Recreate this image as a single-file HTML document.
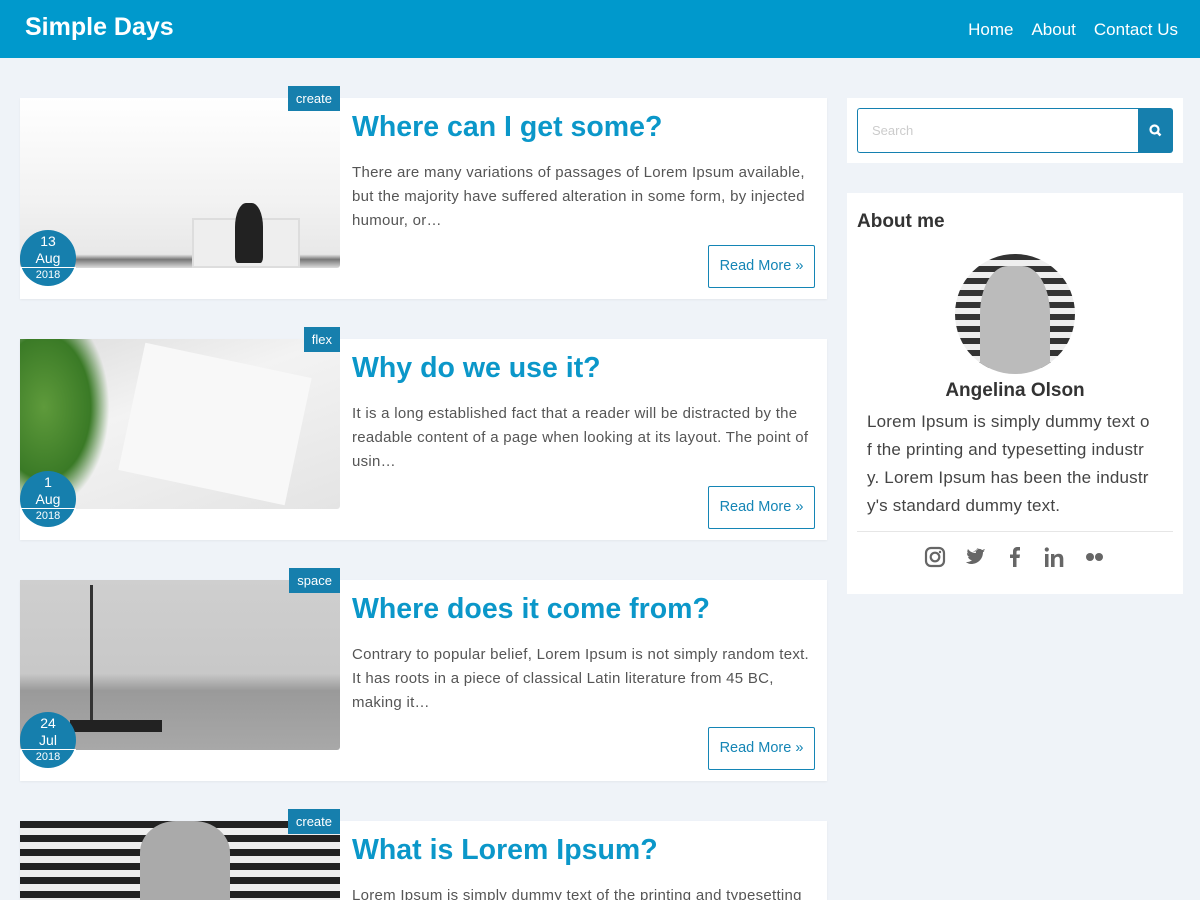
<!DOCTYPE html>
<html><head><meta charset="utf-8"><style>
*{box-sizing:border-box;margin:0;padding:0}
html{width:1200px;height:900px;overflow:hidden}
body{width:1200px;height:900px;overflow:hidden;background:#eff3f8;font-family:"Liberation Sans","Noto Sans CJK JP",sans-serif;position:relative}
.hdr{position:absolute;left:0;top:0;width:1200px;height:58px;background:#0099cc}
.logo{position:absolute;left:25px;top:13px;color:#fff;font-weight:bold;font-size:25px}
.nav{position:absolute;right:22px;top:20px;color:#fff;font-size:17px}
.nav span{margin-left:18px}
.card{position:absolute;left:20px;width:807px;height:201px;background:#fff;box-shadow:0 1px 2px rgba(0,0,0,.05)}
.img{position:absolute;left:0;top:0;width:320px;height:170px;border-radius:0 0 3px 3px;overflow:hidden}
.tag{position:absolute;right:487px;top:-12px;background:#167fad;color:#fff;font-size:13px;padding:0 8px;height:25px;line-height:25px}
.date{position:absolute;left:0;top:132px;width:56px;height:56px;border-radius:50%;background:#167fad;color:#fff;text-align:center;font-size:14px;line-height:17px;padding-top:3px}
.date i{display:block;font-style:normal;font-size:11px;border-top:1px solid #fff;line-height:14px;margin-top:0}
.t{position:absolute;left:332px;top:13px;color:#0b97c9;font-size:28.5px;font-weight:bold}
.p{position:absolute;left:332px;top:63px;width:465px;color:#555;font-size:15px;line-height:24px;letter-spacing:.28px}
.rm{position:absolute;left:688px;top:147px;width:107px;height:43px;border:1px solid #1485b5;border-radius:2px;color:#1485b5;font-size:14.5px;line-height:41px;text-align:center}
.box{position:absolute;left:847px;width:336px;background:#fff}
</style></head><body>
<div class="hdr"><div class="logo">Simple Days</div><div class="nav"><span>Home</span><span>About</span><span>Contact Us</span></div></div>

<div class="card" style="top:98px">
<div class="img" style="background:linear-gradient(180deg,#fff 0%,#f2f2f2 60%,#e8e8e8 92%,#777 95%,#ddd 100%)"><div style="position:absolute;left:172px;top:120px;width:108px;height:50px;background:#eee;border:2px solid #ddd"></div><div style="position:absolute;left:215px;top:105px;width:28px;height:60px;background:#222;border-radius:40% 40% 10% 10%"></div></div>
<div class="tag">create</div>
<div class="date">13<br>Aug<i>2018</i></div>
<div class="t">Where can I get some?</div>
<div class="p">There are many variations of passages of Lorem Ipsum available, but the majority have suffered alteration in some form, by injected humour, or…</div>
<div class="rm">Read More »</div></div>

<div class="card" style="top:339px">
<div class="img" style="background:linear-gradient(160deg,#ddd,#f3f3f3 40%,#e4e4e4)"><div style="position:absolute;left:-20px;top:0;width:110px;height:170px;background:radial-gradient(ellipse at 40% 40%,#5e9a3b,#3a7a26 50%,transparent 70%)"></div><div style="position:absolute;left:110px;top:20px;width:170px;height:130px;background:#f8f8f8;transform:rotate(12deg)"></div></div>
<div class="tag">flex</div>
<div class="date">1<br>Aug<i>2018</i></div>
<div class="t">Why do we use it?</div>
<div class="p">It is a long established fact that a reader will be distracted by the readable content of a page when looking at its layout. The point of usin…</div>
<div class="rm">Read More »</div></div>

<div class="card" style="top:580px">
<div class="img" style="background:linear-gradient(180deg,#cfcfcf 0%,#c8c8c8 55%,#9a9a9a 65%,#a8a8a8 100%)"><div style="position:absolute;left:70px;top:5px;width:3px;height:140px;background:#333"></div><div style="position:absolute;left:50px;top:140px;width:92px;height:12px;background:#222"></div></div>
<div class="tag">space</div>
<div class="date">24<br>Jul<i>2018</i></div>
<div class="t">Where does it come from?</div>
<div class="p">Contrary to popular belief, Lorem Ipsum is not simply random text. It has roots in a piece of classical Latin literature from 45 BC, making it…</div>
<div class="rm">Read More »</div></div>

<div class="card" style="top:821px;height:79px;overflow:visible">
<div class="img" style="height:79px;border-radius:0;background:repeating-linear-gradient(180deg,#222 0 7px,#eee 7px 14px)"><div style="position:absolute;left:120px;top:0;width:90px;height:79px;background:#aaa;border-radius:40% 40% 0 0"></div></div>
<div class="tag">create</div>
<div class="t">What is Lorem Ipsum?</div>
<div class="p" style="height:16px;overflow:hidden">Lorem Ipsum is simply dummy text of the printing and typesetting</div></div>

<div class="box" style="top:98px;height:65px">
<div style="position:absolute;left:10px;top:10px;width:282px;height:45px;border:1px solid #1480b0;border-right:none;border-radius:3px 0 0 3px;color:#ccc;font-size:13px;padding:14px 0 0 14px">Search</div>
<div style="position:absolute;left:291px;top:10px;width:35px;height:45px;background:#167fad;border-radius:0 3px 3px 0"><svg width="35" height="45" viewBox="0 0 35 45"><circle cx="16.5" cy="21.5" r="4" fill="none" stroke="#fff" stroke-width="2.2"/><line x1="19.5" y1="24.5" x2="22.5" y2="27.5" stroke="#fff" stroke-width="2.5"/></svg></div></div>

<div class="box" style="top:193px;height:401px">
<div style="position:absolute;left:10px;top:18px;font-size:19px;font-weight:bold;color:#333">About me</div>
<div style="position:absolute;left:108px;top:61px;width:120px;height:120px;border-radius:50%;background:repeating-linear-gradient(180deg,#333 0 6px,#eee 6px 12px);overflow:hidden"><div style="position:absolute;left:25px;top:12px;width:70px;height:120px;background:#bbb;border-radius:40% 40% 0 0"></div></div>
<div style="position:absolute;left:0;top:187px;width:336px;text-align:center;font-size:19px;font-weight:bold;color:#333">Angelina Olson</div>
<div style="position:absolute;left:20px;top:215px;width:310px;font-size:17px;line-height:28px;color:#444;white-space:nowrap;letter-spacing:.2px">Lorem Ipsum is simply dummy text o<br>f the printing and typesetting industr<br>y. Lorem Ipsum has been the industr<br>y's standard dummy text.</div>
<div style="position:absolute;left:10px;top:338px;width:316px;border-top:1px solid #e6e6e6"></div>
<svg style="position:absolute;left:70px;top:350px" width="200" height="30" viewBox="0 0 200 30" fill="#666">
<rect x="9" y="5" width="18" height="18" rx="5" fill="none" stroke="#666" stroke-width="2.2"/><circle cx="18" cy="14" r="4.3" fill="none" stroke="#666" stroke-width="2.2"/><circle cx="23" cy="9" r="1.2"/>
<g transform="translate(8,0)"><path d="M48 9c1 0 3-1 3-1c1-2 4-3 6-1c1 0 2-1 3-1c-1 1-1 2-2 2c1 0 2 0 2-1c-1 1-1 2-2 2c0 7-5 12-12 12c-2 0-4-1-5-2c2 0 4 0 6-2c-2 0-3-1-4-3h2c-2 0-3-2-3-4c1 0 1 1 2 1c-2-1-2-3-1-5c2 3 5 4 8 4c-1-3 1-5 3-5z"/></g>
<path d="M96 24v-9h-3v-3.5h3v-3c0-3 2-4.5 4.5-4.5h2.5v3.5h-2c-1 0-1.5.5-1.5 1.5v2.5h3.5l-.5 3.5h-3v9z"/>
<rect x="128" y="11" width="3.5" height="13"/><circle cx="129.8" cy="6.5" r="2.1"/><path d="M134 11h3.3v2c1-1.5 2.5-2.3 4.5-2.3c3 0 4.5 2 4.5 5.3v8h-3.5v-7.5c0-1.7-.7-2.7-2.2-2.7s-3 1-3 3v7.2h-3.6z"/>
<circle cx="173" cy="14" r="4"/><circle cx="182" cy="14" r="4"/></svg>
</div>
</body></html>
